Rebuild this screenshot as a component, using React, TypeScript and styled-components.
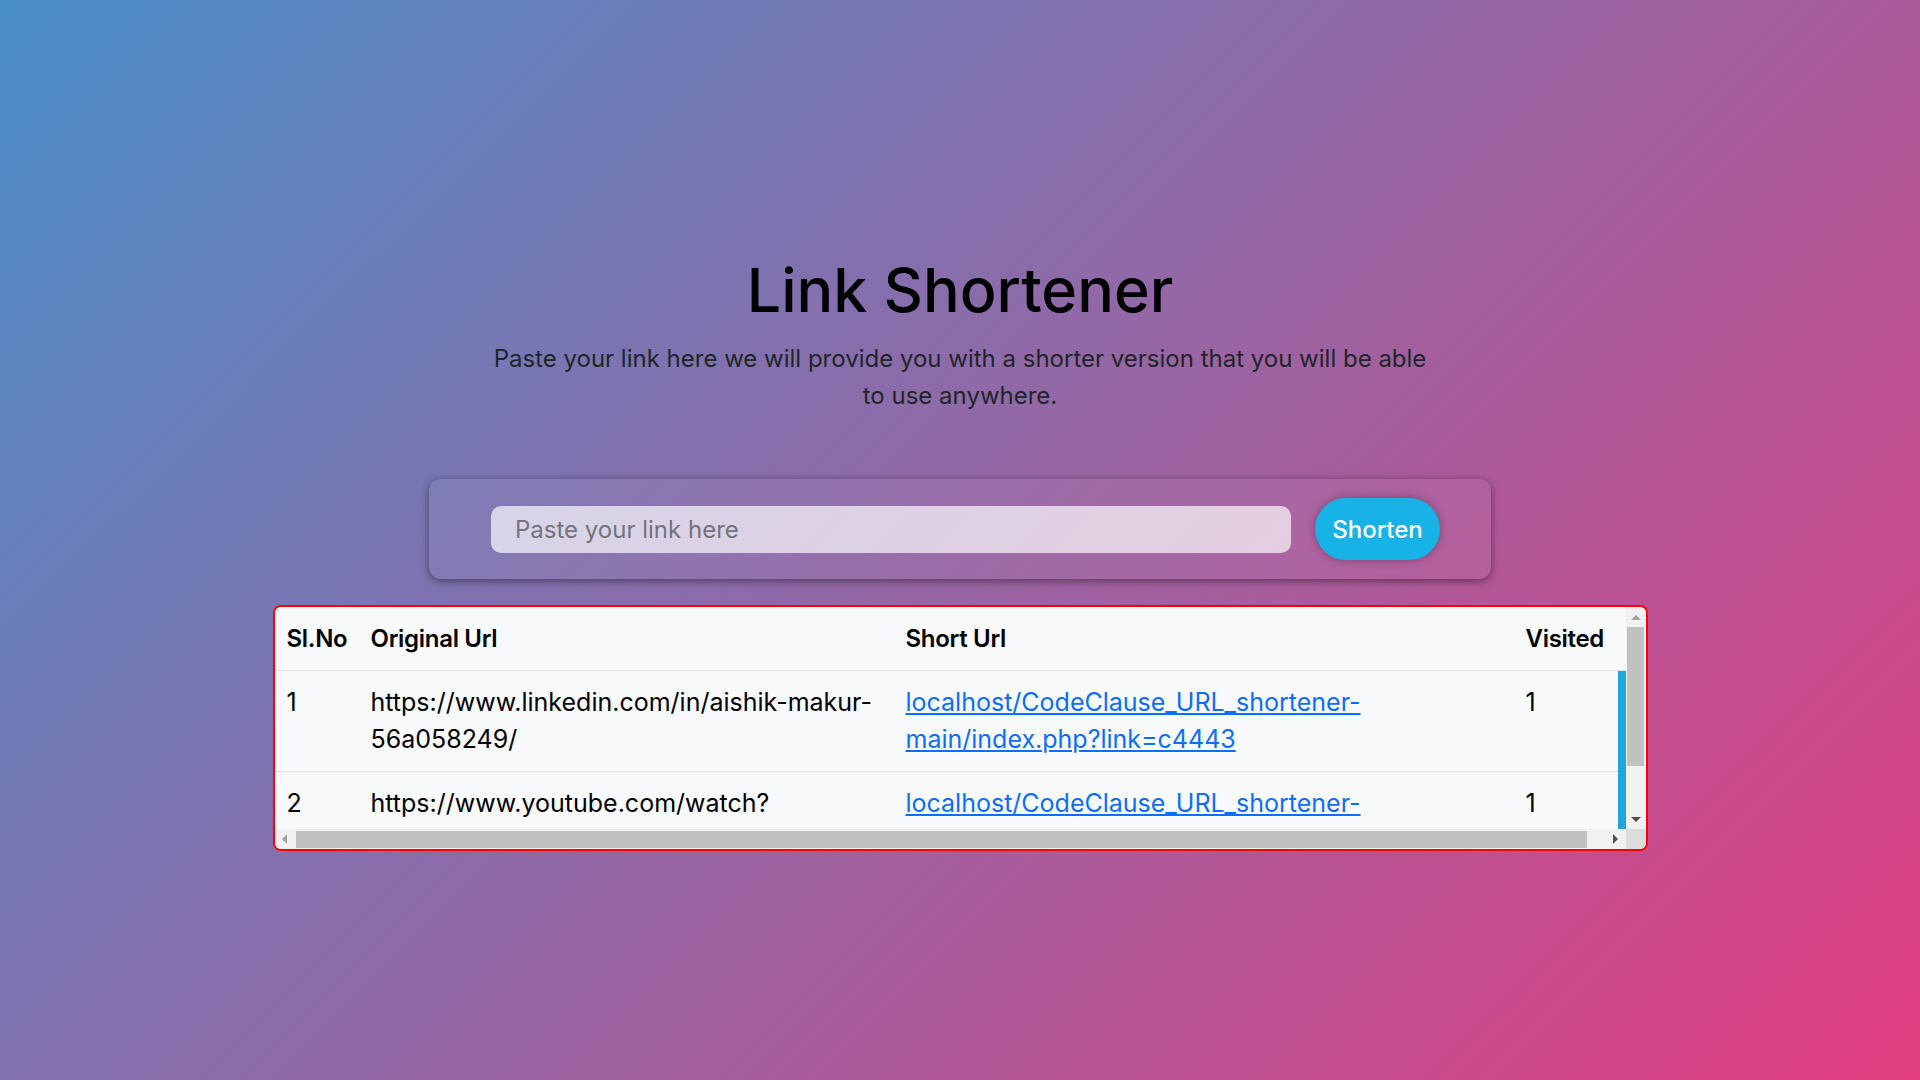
import React from "react";
import styled, { createGlobalStyle } from "styled-components";

const GlobalStyle = createGlobalStyle`
  html, body { margin: 0; padding: 0; }
  * { box-sizing: border-box; }
  body { font-family: Inter, Roboto, "Liberation Sans", Arial, sans-serif; }
`;

const Page = styled.main`
  min-height: 100vh;
  background: linear-gradient(135deg, #4a8fc9 0%, #e23d80 100%);
  display: flex;
  flex-direction: column;
  align-items: center;
  padding-top: 254px;
  font-family: Inter, Roboto, "Liberation Sans", Arial, sans-serif;
`;

const Title = styled.h1`
  margin: 0;
  font-size: 61px;
  line-height: 72px;
  font-weight: 500;
  color: #000;
`;

const Lead = styled.p`
  margin: 14px 0 0;
  width: 960px;
  text-align: center;
  font-size: 24px;
  line-height: 37px;
  color: #212529;
`;

const Form = styled.form`
  margin-top: 65px;
  width: 1062px;
  height: 100px;
  border-radius: 12px;
  background: rgba(255, 255, 255, 0.05);
  box-shadow: 0 2px 8px rgba(0, 0, 0, 0.45);
  display: flex;
  align-items: center;
  gap: 24px;
  padding-left: 62px;
`;

const Input = styled.input`
  width: 800px;
  height: 47px;
  border: none;
  outline: none;
  border-radius: 10px;
  background: rgba(255, 255, 255, 0.68);
  padding: 0 24px;
  font-family: inherit;
  font-size: 24px;
  color: #212529;
  &::placeholder {
    color: #74727a;
  }
`;

const Button = styled.button`
  width: 125px;
  height: 62px;
  border: none;
  border-radius: 31px;
  background: #17b3e6;
  color: #fff;
  font-family: inherit;
  font-size: 24px;
  font-weight: 500;
  box-shadow: 0 0 10px rgba(0, 0, 0, 0.3);
  cursor: pointer;
`;

const TableFrame = styled.div`
  margin-top: 26px;
  width: 1375px;
  height: 246px;
  border: 2px solid #ff0000;
  border-radius: 8px;
  overflow: hidden;
  background: #f8f9fa;
  display: grid;
  grid-template-columns: 1fr 20px;
  grid-template-rows: 1fr 20px;
`;

const Viewport = styled.div`
  overflow: hidden;
`;

const VScroll = styled.div`
  background: #f1f1f1;
  display: flex;
  flex-direction: column;
`;

const HScroll = styled.div`
  background: #f1f1f1;
  display: flex;
  flex-direction: row;
`;

const Corner = styled.div`
  background: #dcdcdc;
`;

const ArrowButton = styled.div`
  flex: 0 0 20px;
  width: 20px;
  height: 20px;
  display: flex;
  align-items: center;
  justify-content: center;
`;

const Arrow = styled.span<{ $dir: "up" | "down" | "left" | "right"; $active?: boolean }>`
  width: 0;
  height: 0;
  border-style: solid;
  ${({ $dir, $active }) => {
    const c = $active ? "#505050" : "#a3a3a3";
    switch ($dir) {
      case "up":
        return `border-width: 0 5px 5px 5px; border-color: transparent transparent ${c} transparent;`;
      case "down":
        return `border-width: 5px 5px 0 5px; border-color: ${c} transparent transparent transparent;`;
      case "left":
        return `border-width: 5px 5px 5px 0; border-color: transparent ${c} transparent transparent;`;
      default:
        return `border-width: 5px 0 5px 5px; border-color: transparent transparent transparent ${c};`;
    }
  }}
`;

const VTrack = styled.div`
  flex: 1;
  padding: 0 2px 0 1px;
`;

const HTrack = styled.div`
  flex: 1;
  padding: 2px 0 1px 1px;
`;

const VThumb = styled.div`
  width: 100%;
  background: #c1c1c1;
`;

const HThumb = styled.div`
  height: 100%;
  background: #c1c1c1;
`;

const Table = styled.table`
  width: 1372px;
  table-layout: fixed;
  border-collapse: collapse;
  margin-bottom: 22px;
  background: #f8f9fa;
  color: #000;
  font-size: 24px;
  line-height: 37px;
`;

const Th = styled.th`
  text-align: left;
  font-weight: 600;
  padding: 13px 12px;
  border-bottom: 1px solid #dee2e6;
  white-space: nowrap;
  letter-spacing: -0.3px;
`;

const Td = styled.td<{ $accent?: boolean }>`
  vertical-align: top;
  padding: 13px 12px;
  font-size: 25px;
  border-bottom: 1px solid ${(p) => (p.$accent ? "#22a6d8" : "#dee2e6")};
  background: ${(p) => (p.$accent ? "#22a6d8" : "transparent")};
`;

const Segment = styled.span`
  white-space: nowrap;
`;

const ShortLink = styled.a`
  color: #0d6efd;
  text-decoration: underline;
`;

const rows = [
  {
    id: 1,
    original: ["https://www.linkedin.com/in/aishik-makur-", "56a058249/"],
    short: ["localhost/CodeClause_URL_shortener-", "main/index.php?link=c4443"],
    visited: 1,
  },
  {
    id: 2,
    original: ["https://www.youtube.com/watch?", "v=dQw4w9WgXcQ"],
    short: ["localhost/CodeClause_URL_shortener-", "main/index.php?link=a81f2"],
    visited: 1,
  },
];

const colWidths = [84, 535, 620, 104, 29];

export default function App() {
  return (
    <>
      <GlobalStyle />
      <Page>
        <Title>Link Shortener</Title>
        <Lead>
          Paste your link here we will provide you with a shorter version that you will be able to use anywhere.
        </Lead>
        <Form onSubmit={(e) => e.preventDefault()}>
          <Input type="text" placeholder="Paste your link here" />
          <Button type="submit">Shorten</Button>
        </Form>
        <TableFrame>
          <Viewport>
            <Table>
              <colgroup>
                {colWidths.map((w, i) => (
                  <col key={i} style={{ width: w }} />
                ))}
              </colgroup>
              <thead>
                <tr>
                  <Th>Sl.No</Th>
                  <Th>Original Url</Th>
                  <Th>Short Url</Th>
                  <Th>Visited</Th>
                  <Th />
                </tr>
              </thead>
              <tbody>
                {rows.map((r) => (
                  <tr key={r.id}>
                    <Td>{r.id}</Td>
                    <Td>
                      <Segment>{r.original[0]}</Segment>
                      <wbr />
                      <Segment>{r.original[1]}</Segment>
                    </Td>
                    <Td>
                      <ShortLink href="#">
                        <Segment>{r.short[0]}</Segment>
                        <wbr />
                        <Segment>{r.short[1]}</Segment>
                      </ShortLink>
                    </Td>
                    <Td>{r.visited}</Td>
                    <Td $accent />
                  </tr>
                ))}
              </tbody>
            </Table>
          </Viewport>
          <VScroll>
            <ArrowButton>
              <Arrow $dir="up" />
            </ArrowButton>
            <VTrack>
              <VThumb style={{ height: 139 }} />
            </VTrack>
            <ArrowButton>
              <Arrow $dir="down" $active />
            </ArrowButton>
          </VScroll>
          <HScroll>
            <ArrowButton>
              <Arrow $dir="left" />
            </ArrowButton>
            <HTrack>
              <HThumb style={{ width: 1291 }} />
            </HTrack>
            <ArrowButton>
              <Arrow $dir="right" $active />
            </ArrowButton>
          </HScroll>
          <Corner />
        </TableFrame>
      </Page>
    </>
  );
}
